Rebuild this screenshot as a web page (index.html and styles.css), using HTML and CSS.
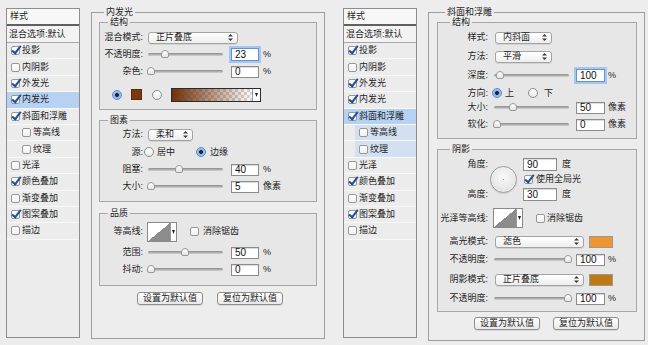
FILE: index.html
```html
<!DOCTYPE html>
<html lang="zh-CN">
  <head>
    <meta charset="UTF-8" />
    <meta name="viewport" content="width=device-width, initial-scale=1.0" />
    <title>图层样式</title>
    <link rel="stylesheet" href="styles.css">
  </head>
  <body>
    <!-- 左: 内发光 -->
    <div class="dialog dialog-a">
      <div class="styles">
        <div class="styles-head">样式</div>
        <div class="styles-blend">混合选项:默认</div>
        <div class="item"><span class="cb on"></span>投影</div>
        <div class="item"><span class="cb"></span>内阴影</div>
        <div class="item"><span class="cb on"></span>外发光</div>
        <div class="item selected"><span class="cb on"></span>内发光</div>
        <div class="item"><span class="cb on"></span>斜面和浮雕</div>
        <div class="item sub"><span class="cb"></span>等高线</div>
        <div class="item sub"><span class="cb"></span>纹理</div>
        <div class="item"><span class="cb"></span>光泽</div>
        <div class="item"><span class="cb on"></span>颜色叠加</div>
        <div class="item"><span class="cb"></span>渐变叠加</div>
        <div class="item"><span class="cb on"></span>图案叠加</div>
        <div class="item"><span class="cb"></span>描边</div>
      </div>

      <fieldset class="panel">
        <legend class="lg-outer">内发光</legend>

        <fieldset class="group g-a1">
          <legend>结构</legend>
          <div class="row">
            <span class="lbl">混合模式:</span>
            <div class="sel" style="width: 90px"><span>正片叠底</span>
              <svg class="arr" width="5" height="7" viewBox="0 0 5 7"><path d="M2.5 0L5 2.6H0zM2.5 7L0 4.4h5z" /></svg></div>
          </div>
          <div class="row">
            <span class="lbl">不透明度:</span>
            <div class="slider"><span class="knob" style="left: 13px"></span></div>
            <input class="num focus" type="text" value="23" readonly />
            <span class="unit">%</span>
          </div>
          <div class="row">
            <span class="lbl">杂色:</span>
            <div class="slider"><span class="knob" style="left: -1px"></span></div>
            <input class="num" type="text" value="0" readonly />
            <span class="unit">%</span>
          </div>
          <div class="row row-colors">
            <span class="radio on"></span>
            <span class="swatch"></span>
            <span class="radio"></span>
            <span class="grad"><span class="grad-fill"></span>
              <span class="drop"><svg width="3" height="4" viewBox="0 0 3 4"><path d="M0 0h3L1.5 4z" /></svg></span></span>
          </div>
        </fieldset>

        <fieldset class="group g-a2">
          <legend>图素</legend>
          <div class="row">
            <span class="lbl">方法:</span>
            <div class="sel" style="width: 45px"><span>柔和</span>
              <svg class="arr" width="5" height="7" viewBox="0 0 5 7"><path d="M2.5 0L5 2.6H0zM2.5 7L0 4.4h5z" /></svg></div>
          </div>
          <div class="row row-src">
            <span class="lbl">源:</span>
            <span class="radio"></span><span class="opt">居中</span>
            <span class="radio on r-gap"></span><span class="opt opt-b">边缘</span>
          </div>
          <div class="row">
            <span class="lbl">阻塞:</span>
            <div class="slider"><span class="knob" style="left: 27px"></span></div>
            <input class="num" type="text" value="40" readonly />
            <span class="unit">%</span>
          </div>
          <div class="row">
            <span class="lbl">大小:</span>
            <div class="slider"><span class="knob" style="left: -1px"></span></div>
            <input class="num" type="text" value="5" readonly />
            <span class="unit">像素</span>
          </div>
        </fieldset>

        <fieldset class="group g-a3">
          <legend>品质</legend>
          <div class="row row-tall">
            <span class="lbl">等高线:</span>
            <span class="contour"><span class="curve"></span>
              <span class="drop"><svg width="3" height="4" viewBox="0 0 3 4"><path d="M0 0h3L1.5 4z" /></svg></span></span>
            <span class="cb cb-gap"></span><span class="opt">消除锯齿</span>
          </div>
          <div class="row row-gap">
            <span class="lbl">范围:</span>
            <div class="slider"><span class="knob" style="left: 33px"></span></div>
            <input class="num" type="text" value="50" readonly />
            <span class="unit">%</span>
          </div>
          <div class="row">
            <span class="lbl">抖动:</span>
            <div class="slider"><span class="knob" style="left: -1px"></span></div>
            <input class="num" type="text" value="0" readonly />
            <span class="unit">%</span>
          </div>
        </fieldset>

        <div class="btns">
          <button>设置为默认值</button>
          <button>复位为默认值</button>
        </div>
      </fieldset>
    </div>

    <!-- 右: 斜面和浮雕 -->
    <div class="dialog dialog-b">
      <div class="styles">
        <div class="styles-head">样式</div>
        <div class="styles-blend">混合选项:默认</div>
        <div class="item"><span class="cb on"></span>投影</div>
        <div class="item"><span class="cb"></span>内阴影</div>
        <div class="item"><span class="cb on"></span>外发光</div>
        <div class="item"><span class="cb on"></span>内发光</div>
        <div class="item selected"><span class="cb on"></span>斜面和浮雕</div>
        <div class="item sub sub-selected"><span class="cb"></span>等高线</div>
        <div class="item sub sub-selected"><span class="cb"></span>纹理</div>
        <div class="item"><span class="cb"></span>光泽</div>
        <div class="item"><span class="cb on"></span>颜色叠加</div>
        <div class="item"><span class="cb"></span>渐变叠加</div>
        <div class="item"><span class="cb on"></span>图案叠加</div>
        <div class="item"><span class="cb"></span>描边</div>
      </div>

      <fieldset class="panel">
        <legend class="lg-outer">斜面和浮雕</legend>

        <fieldset class="group g-b1">
          <legend>结构</legend>
          <div class="row">
            <span class="lbl">样式:</span>
            <div class="sel" style="width: 57px"><span>内斜面</span>
              <svg class="arr" width="5" height="7" viewBox="0 0 5 7"><path d="M2.5 0L5 2.6H0zM2.5 7L0 4.4h5z" /></svg></div>
          </div>
          <div class="row row-gap">
            <span class="lbl">方法:</span>
            <div class="sel" style="width: 57px"><span>平滑</span>
              <svg class="arr" width="5" height="7" viewBox="0 0 5 7"><path d="M2.5 0L5 2.6H0zM2.5 7L0 4.4h5z" /></svg></div>
          </div>
          <div class="row row-depth">
            <span class="lbl">深度:</span>
            <div class="slider"><span class="knob" style="left: 2px"></span></div>
            <input class="num focus" type="text" value="100" readonly />
            <span class="unit">%</span>
          </div>
          <div class="row row-dir">
            <span class="lbl">方向:</span>
            <span class="radio on"></span><span class="opt">上</span>
            <span class="radio r-gap2"></span><span class="opt opt-c">下</span>
          </div>
          <div class="row row-short">
            <span class="lbl">大小:</span>
            <div class="slider"><span class="knob" style="left: 15px"></span></div>
            <input class="num" type="text" value="50" readonly />
            <span class="unit">像素</span>
          </div>
          <div class="row row-short row-soft">
            <span class="lbl">软化:</span>
            <div class="slider"><span class="knob" style="left: -1px"></span></div>
            <input class="num" type="text" value="0" readonly />
            <span class="unit">像素</span>
          </div>
        </fieldset>

        <fieldset class="group g-b2">
          <legend>阴影</legend>
          <div class="angle">
            <div class="angle-lbls">
              <span>角度:</span>
              <span>高度:</span>
            </div>
            <span class="dial"></span>
            <div class="angle-ctrls">
              <div class="line"><input class="num num-deg" type="text" value="90" readonly /><span class="deg">度</span></div>
              <div class="line"><span class="cb on cb-global"></span><span class="opt">使用全局光</span></div>
              <div class="line"><input class="num num-deg" type="text" value="30" readonly /><span class="deg">度</span></div>
            </div>
          </div>
          <div class="row row-gloss">
            <span class="lbl">光泽等高线:</span>
            <span class="contour"><span class="curve"></span>
              <span class="drop"><svg width="3" height="4" viewBox="0 0 3 4"><path d="M0 0h3L1.5 4z" /></svg></span></span>
            <span class="cb cb-gap"></span><span class="opt">消除锯齿</span>
          </div>
          <div class="row row-hl">
            <span class="lbl">高光模式:</span>
            <div class="sel" style="width: 89px"><span>滤色</span>
              <svg class="arr" width="5" height="7" viewBox="0 0 5 7"><path d="M2.5 0L5 2.6H0zM2.5 7L0 4.4h5z" /></svg></div>
            <span class="chip chip-hl"></span>
          </div>
          <div class="row row-op1">
            <span class="lbl">不透明度:</span>
            <div class="slider"><span class="knob" style="left: 70px"></span></div>
            <input class="num" type="text" value="100" readonly />
            <span class="unit">%</span>
          </div>
          <div class="row row-sh">
            <span class="lbl">阴影模式:</span>
            <div class="sel" style="width: 89px"><span>正片叠底</span>
              <svg class="arr" width="5" height="7" viewBox="0 0 5 7"><path d="M2.5 0L5 2.6H0zM2.5 7L0 4.4h5z" /></svg></div>
            <span class="chip chip-sh"></span>
          </div>
          <div class="row row-op2">
            <span class="lbl">不透明度:</span>
            <div class="slider"><span class="knob" style="left: 70px"></span></div>
            <input class="num" type="text" value="100" readonly />
            <span class="unit">%</span>
          </div>
        </fieldset>

        <div class="btns">
          <button>设置为默认值</button>
          <button>复位为默认值</button>
        </div>
      </fieldset>
    </div>
  </body>
</html>
```

FILE: styles.css
```css
* {
  box-sizing: border-box;
}
body {
  margin: 0;
  width: 648px;
  height: 345px;
  overflow: hidden;
  display: flex;
  background: #ededed;
  color: #1f1f1f;
  font-family: "Liberation Sans", "Noto Sans CJK SC", sans-serif;
  font-size: 9px;
  line-height: 1;
}

.dialog {
  flex: none;
  display: flex;
  align-items: flex-start;
  padding: 7px 0 0 6px;
}
.dialog-a {
  width: 337px;
}
.dialog-b {
  width: 311px;
}

/* Styles list */
.styles {
  flex: none;
  width: 74px;
  height: 330px;
  margin-top: 1px;
  border: 1px solid #8e8e8e;
  background: #ececec;
}
.styles-head {
  display: flex;
  align-items: center;
  height: 17px;
  padding-left: 3px;
  background: #f7f7f7;
  border-bottom: 2px solid #606060;
}
.styles-blend {
  display: flex;
  align-items: center;
  height: 17px;
  padding-left: 2px;
  background: #f3f3f3;
  border-bottom: 1px solid #a8a8a8;
}
.item {
  display: flex;
  align-items: center;
  height: 16.4px;
  padding-left: 4px;
  border-bottom: 1px solid #f8f8f8;
}
.item .cb {
  margin-right: 2px;
}
.item.sub {
  padding-left: 15px;
}
.item.selected {
  background: #b7d1f2;
}
.item.sub-selected {
  background: linear-gradient(to right, transparent 11px, #d2e0f2 11px);
}

/* checkbox / radio */
.cb {
  position: relative;
  flex: none;
  width: 9px;
  height: 9px;
  border: 1px solid #979797;
  border-radius: 2px;
  background: linear-gradient(#fff, #f1f1f1);
}
.cb.on::after {
  content: "";
  position: absolute;
  left: 2px;
  top: -3px;
  width: 3px;
  height: 8px;
  border: solid #1c4f9f;
  border-width: 0 2px 2px 0;
  transform: rotate(38deg);
}
.radio {
  flex: none;
  width: 10px;
  height: 10px;
  border: 1px solid #8d8d8d;
  border-radius: 50%;
  background: linear-gradient(#fff, #eaeaea);
}
.radio.on {
  border-color: #5b87c4;
  background: radial-gradient(circle, #1d2a3a 0 1.6px, #86b3ea 2.3px, #c3dcf7 100%);
}

/* panels */
fieldset {
  margin: 0;
  padding: 0;
  min-width: 0;
}
legend {
  height: 10px;
  line-height: 10px;
  padding: 0 2px;
  margin-left: 8px;
}
.panel {
  flex: none;
  margin-left: 11px;
  border: 1px solid #9d9d9d;
}
.dialog-a .panel {
  width: 234px;
  height: 332px;
  padding: 0 7px;
}
.dialog-b .panel {
  width: 217px;
  height: 334px;
  padding: 0 7px 0 8px;
}
.dialog-a .lg-outer {
  margin-left: 5px;
}
.dialog-b .lg-outer {
  margin-left: 8px;
}
.group {
  border: 1px solid #a7a7a7;
  background: #e7e7e7;
}
.dialog-b .group legend {
  margin-left: 12px;
}
.g-a1 {
  padding: 2px 0 6px;
}
.g-a2 {
  margin-top: 5px;
  padding: 1px 0 6px;
}
.g-a3 {
  margin-top: 6px;
  padding: 3px 0 7px;
}
.g-b1 {
  padding: 2px 0 7px;
}
.g-b2 {
  margin-top: 5px;
  padding: 3px 0 4px;
}

/* rows */
.row {
  display: flex;
  align-items: center;
  height: 17px;
}
.lbl {
  flex: none;
  width: 43px;
  margin-right: 5px;
  text-align: right;
  white-space: nowrap;
}
.dialog-b .lbl {
  width: 50px;
  margin-right: 6px;
}
.row-colors {
  margin-top: 6px;
  padding-left: 12px;
}
.row-src {
  height: 18px;
}
.row-src .lbl {
  margin-right: 1px;
}
.opt {
  margin-left: 3px;
  white-space: nowrap;
}
.r-gap {
  margin-left: 21px;
}
.opt-b {
  margin-left: 4px;
}
.row-tall {
  height: 21px;
}
.row-gap {
  margin-top: 2px;
}
.row-depth {
  margin-top: 1px;
  height: 18px;
}
.row-dir {
  margin-top: 1px;
  height: 16px;
}
.row-dir .radio {
  margin-left: -2px;
}
.row-dir .r-gap2 {
  margin-left: 14px;
}
.opt-c {
  margin-left: 6px;
}
.row-short {
  height: 13px;
}
.row-soft {
  margin-top: 4px;
}
.row-gloss {
  margin-top: 5px;
  height: 22px;
}
.row-hl {
  margin-top: 4px;
}
.row-op1 {
  margin-top: 1px;
}
.row-sh {
  margin-top: 3px;
}
.row-op2 {
  margin-top: 2px;
}

/* select */
.sel {
  flex: none;
  display: flex;
  align-items: center;
  justify-content: space-between;
  height: 12px;
  padding: 0 4px 0 7px;
  border: 1px solid #a3a3a3;
  border-radius: 3px;
  background: linear-gradient(#ffffff, #eeeeee);
  box-shadow: 0 1px 0 rgba(0, 0, 0, 0.08);
}
.dialog-b .sel {
  margin-left: 1px;
}
.arr {
  fill: #3b3b3b;
}

/* slider */
.slider {
  position: relative;
  flex: none;
  width: 75px;
  height: 3px;
  border-radius: 2px;
  background: linear-gradient(#8a8a8a, #d2d2d2);
}
.knob {
  position: absolute;
  top: -3px;
  width: 8px;
  height: 8px;
  border: 1px solid #999;
  border-radius: 4px 4px 2px 2px;
  background: linear-gradient(#ffffff, #e4e4e4);
}

/* numeric field */
.num {
  flex: none;
  width: 28px;
  height: 12px;
  margin-left: 8px;
  padding: 0 3px;
  border: 1px solid #8c8c8c;
  background: #fff;
  color: #111;
  font: 10px "Liberation Sans", sans-serif;
  box-shadow: inset 0 1px 1px rgba(0, 0, 0, 0.15);
  outline: none;
}
.dialog-b .num {
  width: 29px;
  margin-left: 7px;
}
.num.focus {
  height: 13px;
  border-color: #5e93da;
  box-shadow: 0 0 0 2px #a8c7ee;
}
.unit {
  margin-left: 4px;
  white-space: nowrap;
}
.dialog-b .unit {
  margin-left: 3px;
}

/* colour controls */
.swatch {
  flex: none;
  width: 11px;
  height: 11px;
  margin: 0 10px 0 9px;
  background: #7a380c;
  border: 1px solid #5a2a08;
}
.grad {
  flex: none;
  display: flex;
  width: 90px;
  height: 14px;
  margin-left: 9px;
  border: 1px solid #2b2b2b;
}
.grad-fill {
  flex: 1;
  background: linear-gradient(to right, #6f300a, rgba(111, 48, 10, 0)),
    repeating-conic-gradient(#d6d6d6 0 25%, #ffffff 0 50%) 0 0 / 6px 6px;
}
.drop {
  display: flex;
  align-items: center;
  justify-content: center;
  width: 6px;
  background: #fff;
  border-left: 1px solid #9a9a9a;
  fill: #222;
}
.grad .drop {
  width: 8px;
}
.chip {
  flex: none;
  width: 24px;
  height: 12px;
  margin-left: 5px;
  border: 1px solid #9a9a9a;
}
.chip-hl {
  background: #ef952f;
}
.chip-sh {
  background: #c07812;
}

/* contour */
.contour {
  flex: none;
  display: flex;
  height: 20px;
  margin-left: -1px;
  border: 1px solid #8a8a8a;
  background: #fff;
}
.curve {
  width: 22px;
  background: linear-gradient(to top left, #8c8c8c 50%, #ffffff 50%);
}
.cb-gap {
  margin-left: 13px;
}
.row-gloss .opt {
  margin-left: 2px;
}
.row-tall .opt {
  margin-left: 4px;
}

/* angle */
.angle {
  display: flex;
  height: 45px;
}
.angle-lbls {
  flex: none;
  display: flex;
  flex-direction: column;
  justify-content: space-between;
  align-items: flex-end;
  width: 50px;
}
.angle-lbls span {
  display: flex;
  align-items: center;
  height: 15px;
}
.dial {
  position: relative;
  flex: none;
  width: 27px;
  height: 27px;
  margin: 9px 0 0 2px;
  border: 1px solid #9b9b9b;
  border-radius: 50%;
  background: radial-gradient(circle at 50% 40%, #fbfbfb, #d9d9d9);
  box-shadow: inset 0 0 2px #fff, 0 1px 1px rgba(0, 0, 0, 0.12);
}
.dial::after {
  content: "";
  position: absolute;
  left: 12px;
  top: 12px;
  width: 1px;
  height: 1px;
  background: #9a9a9a;
}
.angle-ctrls {
  margin-left: 6px;
}
.line {
  display: flex;
  align-items: center;
  height: 15px;
}
.dialog-b .num-deg {
  width: 34px;
  height: 13px;
  margin-left: 0;
}
.deg {
  margin-left: 5px;
}
.cb-global {
  margin-left: 1px;
}

/* buttons */
.btns {
  display: flex;
  gap: 14px;
  margin-top: 6px;
  padding-left: 38px;
}
.dialog-b .btns {
  gap: 13px;
  margin-top: 5px;
  padding-left: 37px;
}
button {
  width: 66px;
  height: 13px;
  padding: 0;
  border: 1px solid #8d8d8d;
  border-radius: 3px;
  background: linear-gradient(#ffffff, #e8e8e8);
  color: #1f1f1f;
  font: inherit;
  box-shadow: 0 1px 0 rgba(0, 0, 0, 0.08);
}
```
